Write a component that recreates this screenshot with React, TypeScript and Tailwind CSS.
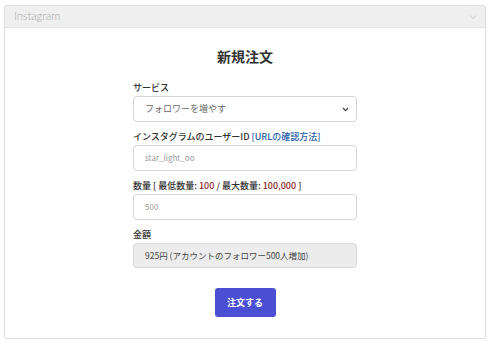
export default function App() {
  const jp = { fontFamily: '"Noto Sans CJK JP", "Noto Sans", sans-serif' };
  return (
    <div className="w-[490px] h-[345px] bg-white pt-[5px] px-[4px]" style={jp}>
      <div className="h-[334px] border border-[#dedede] rounded-[2px] flex flex-col">
        <div className="h-[22px] bg-[#efefef] border-b border-[#e2e2e2] flex items-center justify-between pl-[9px] pr-[8px]">
          <span className="text-[11px] text-[#a8a8a8] font-light" style={{ fontFamily: "Lato, sans-serif" }}>
            Instagram
          </span>
          <svg width="8" height="6" viewBox="0 0 8 6" className="text-[#dcdcdc]">
            <path d="M1 1.5 L4 4.5 L7 1.5" fill="none" stroke="currentColor" strokeWidth="1.3" />
          </svg>
        </div>
        <div className="flex flex-col items-center pt-[18px]">
          <h1 className="text-[14px] leading-[20px] font-bold text-[#333]">新規注文</h1>
          <div className="w-[224px] mt-[16px] flex flex-col gap-[9px]">
            <div>
              <div className="text-[9px] leading-[12px] font-medium text-[#333] mb-[2px]">サービス</div>
              <div className="h-[26px] border border-[#d6d6d6] rounded-[4px] flex items-center justify-between pl-[11px] pr-[7px] text-[9px] text-[#666]">
                <span>フォロワーを増やす</span>
                <svg width="7" height="5" viewBox="0 0 8 6">
                  <path d="M1 1.2 L4 4.3 L7 1.2" fill="none" stroke="#444" strokeWidth="1.4" />
                </svg>
              </div>
            </div>
            <div>
              <div className="text-[9px] leading-[12px] font-medium text-[#333] mb-[2px]">
                インスタグラムのユーザーID <span className="text-[#2560a8]">[URLの確認方法]</span>
              </div>
              <div className="h-[26px] border border-[#d6d6d6] rounded-[4px] flex items-center pl-[11px] text-[8px] text-[#9a9a9a]">
                star_light_oo
              </div>
            </div>
            <div>
              <div className="text-[9px] leading-[12px] font-medium text-[#333] mb-[2px]">
                数量 [ 最低数量: <span className="text-[#8e2a2a]">100</span> / 最大数量: <span className="text-[#8e2a2a]">100,000</span> ]
              </div>
              <div className="h-[26px] border border-[#d6d6d6] rounded-[4px] flex items-center pl-[11px] text-[8px] text-[#9a9a9a]">
                500
              </div>
            </div>
            <div>
              <div className="text-[9px] leading-[12px] font-medium text-[#333] mb-[2px]">金額</div>
              <div className="h-[25px] border border-[#d8d8d8] bg-[#ececec] rounded-[4px] flex items-center pl-[11px] text-[8.5px] text-[#444]">
                925円 (アカウントのフォロワー500人増加)
              </div>
            </div>
          </div>
          <button className="mt-[20px] w-[61px] h-[29px] rounded-[3px] bg-[#4a4fd3] text-white text-[9px] font-bold">
            注文する
          </button>
        </div>
      </div>
    </div>
  );
}
